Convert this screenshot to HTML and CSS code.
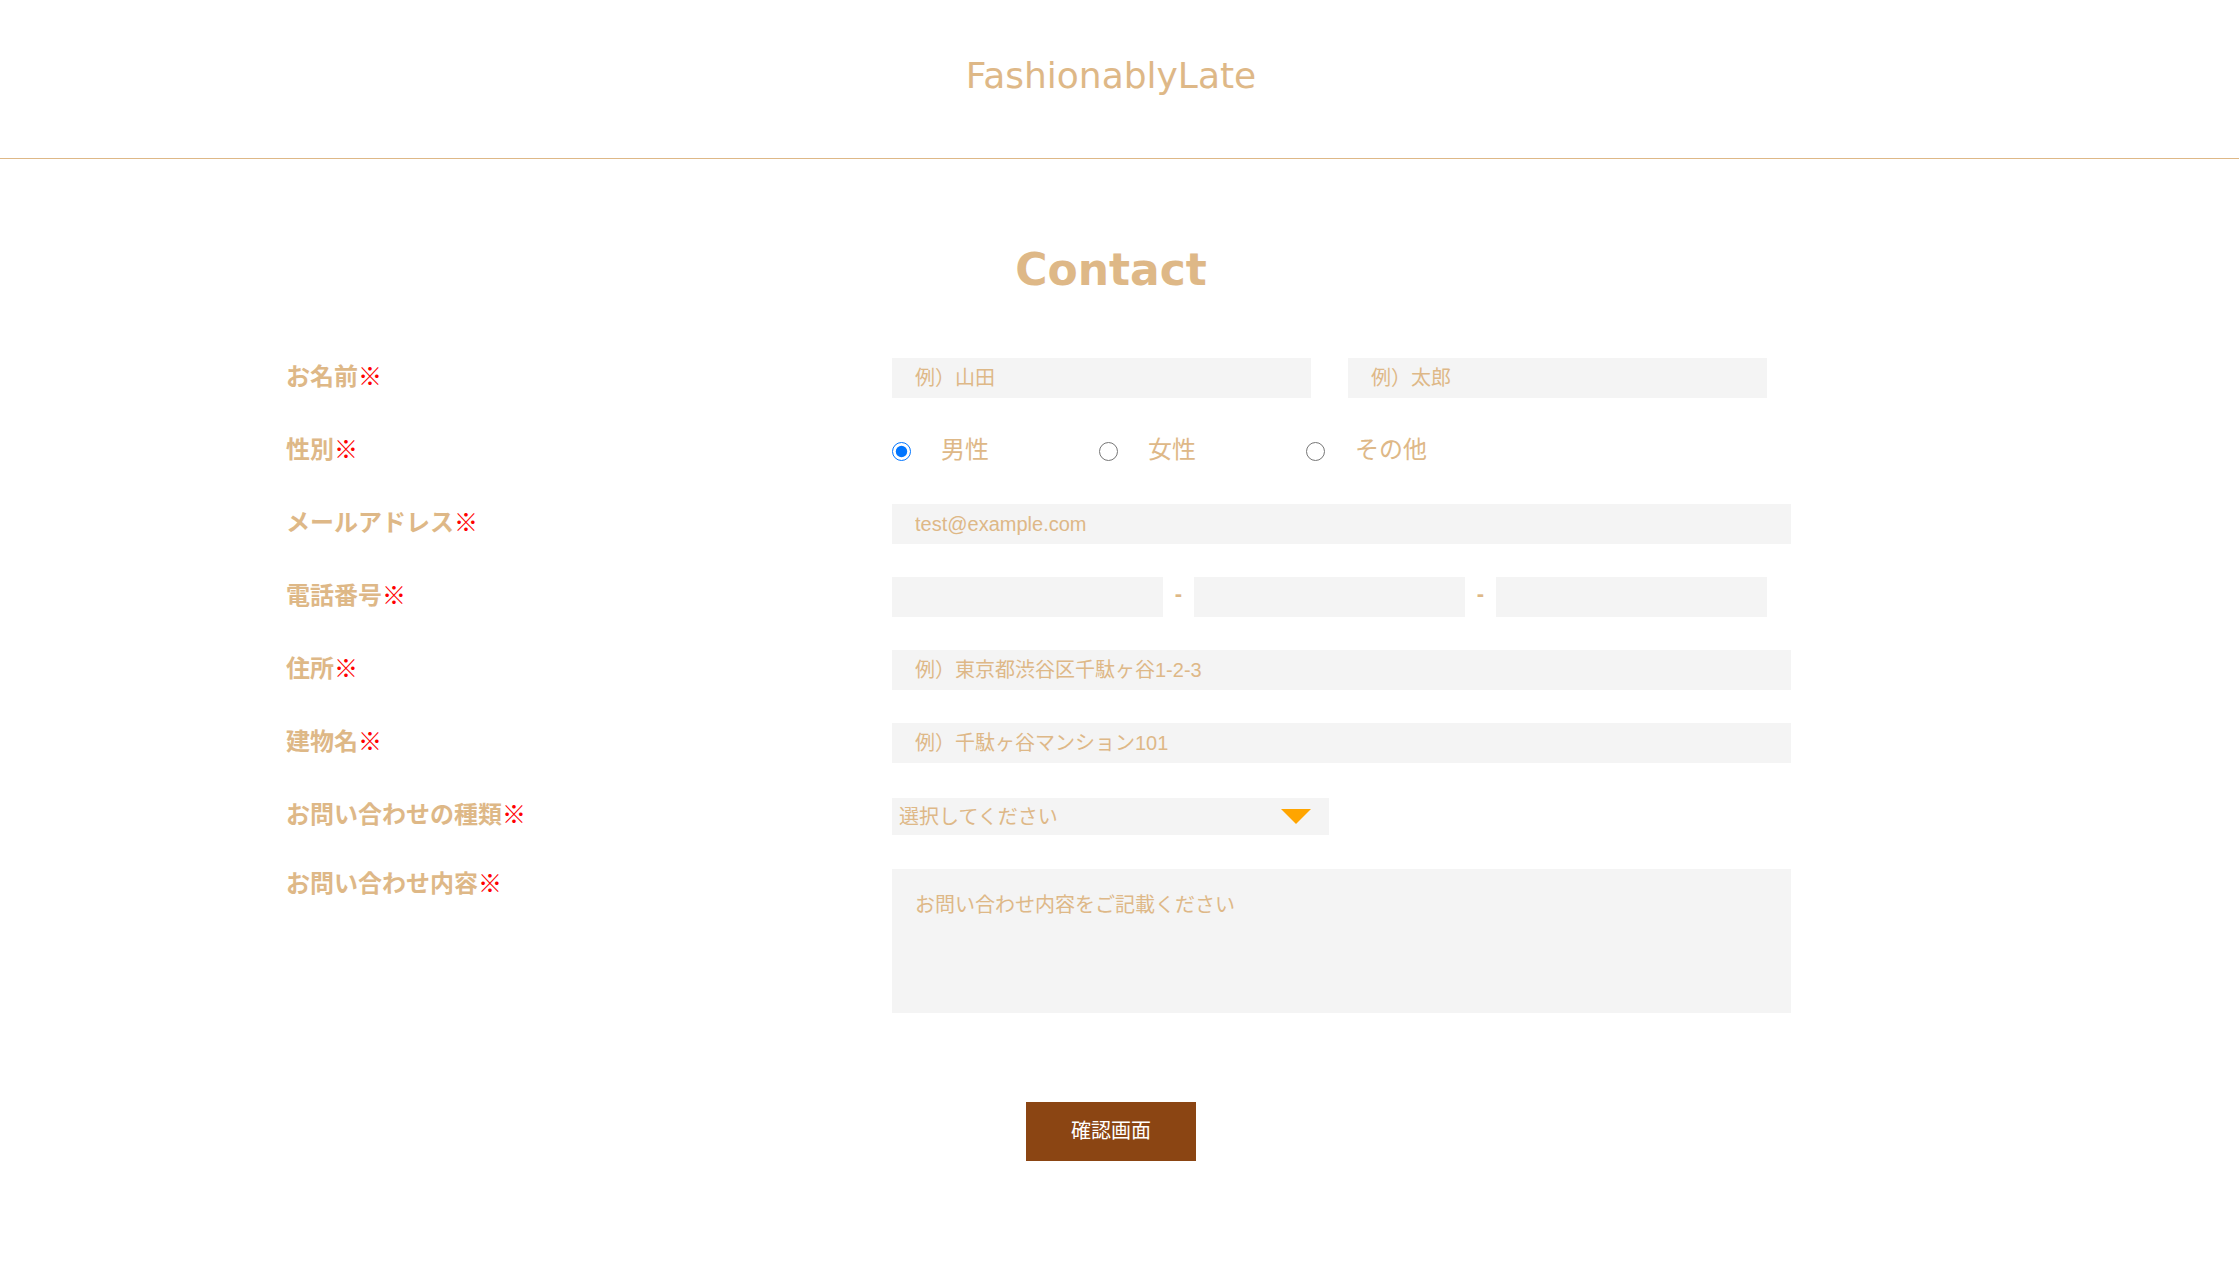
FILE: index.html
```html
<!DOCTYPE html>
<html lang="ja">
<head>
<meta charset="utf-8">
<title>Contact</title>
<link rel="stylesheet" href="styles.css">
</head>
<body>
<header class="site-header">
  <div class="header-inner">
    <h1 class="logo">FashionablyLate</h1>
  </div>
</header>
<main class="page">
  <h2 class="page-title">Contact</h2>
  <form class="contact-form">
    <div class="row">
      <label class="row-label">お名前<span class="req">※</span></label>
      <div class="row-field pair">
        <input class="text-input half" type="text" placeholder="例）山田">
        <input class="text-input half" type="text" placeholder="例）太郎">
      </div>
    </div>
    <div class="row">
      <label class="row-label">性別<span class="req">※</span></label>
      <div class="row-field radios">
        <label class="radio-item"><input type="radio" name="gender" checked><span class="radio-text">男性</span></label>
        <label class="radio-item"><input type="radio" name="gender"><span class="radio-text">女性</span></label>
        <label class="radio-item"><input type="radio" name="gender"><span class="radio-text">その他</span></label>
      </div>
    </div>
    <div class="row">
      <label class="row-label">メールアドレス<span class="req">※</span></label>
      <div class="row-field">
        <input class="text-input full" type="email" placeholder="test@example.com">
      </div>
    </div>
    <div class="row">
      <label class="row-label">電話番号<span class="req">※</span></label>
      <div class="row-field phone">
        <input class="text-input tel" type="tel">
        <span class="dash">-</span>
        <input class="text-input tel" type="tel">
        <span class="dash">-</span>
        <input class="text-input tel" type="tel">
      </div>
    </div>
    <div class="row">
      <label class="row-label">住所<span class="req">※</span></label>
      <div class="row-field">
        <input class="text-input full" type="text" placeholder="例）東京都渋谷区千駄ヶ谷1-2-3">
      </div>
    </div>
    <div class="row">
      <label class="row-label">建物名<span class="req">※</span></label>
      <div class="row-field">
        <input class="text-input full" type="text" placeholder="例）千駄ヶ谷マンション101">
      </div>
    </div>
    <div class="row row-select">
      <label class="row-label">お問い合わせの種類<span class="req">※</span></label>
      <div class="row-field">
        <span class="select-wrap">
          <select class="select">
            <option>選択してください</option>
          </select>
        </span>
      </div>
    </div>
    <div class="row row-top">
      <label class="row-label">お問い合わせ内容<span class="req">※</span></label>
      <div class="row-field">
        <textarea class="textarea" placeholder="お問い合わせ内容をご記載ください"></textarea>
      </div>
    </div>
    <div class="actions">
      <button class="submit" type="button">確認画面</button>
    </div>
  </form>
</main>
</body>
</html>
```
FILE: styles.css
```css
* { box-sizing: border-box; }

html, body {
  margin: 0;
  padding: 0;
  background: #ffffff;
}

body {
  font-family: "Liberation Sans", "Noto Sans CJK JP", sans-serif;
  color: #deb887;
}

.site-header {
  height: 159px;
  border-bottom: 1px solid #deb887;
}

.header-inner {
  width: calc(100% - 17px);
  height: 158px;
  display: flex;
  align-items: center;
  justify-content: center;
  padding-bottom: 6px;
}

.logo {
  margin: 0;
  font-family: "DejaVu Sans", "Noto Sans CJK JP", sans-serif;
  font-weight: normal;
  font-size: 36px;
  line-height: 44px;
  color: #deb887;
}

.page {
  width: calc(100% - 17px);
}

.page-title {
  margin: 81px 0 0;
  text-align: center;
  font-family: "DejaVu Sans", "Noto Sans CJK JP", sans-serif;
  font-weight: bold;
  font-size: 44px;
  line-height: 60px;
  color: #deb887;
}

.contact-form {
  width: 1650px;
  margin: 58px auto 0;
  display: flex;
  flex-direction: column;
  gap: 33px;
}

.row {
  display: flex;
  align-items: center;
  min-height: 40px;
}

.row-select { min-height: 37px; }

.row-top { align-items: flex-start; }

.row-label {
  width: 606px;
  flex: none;
  font-family: "Noto Sans CJK JP", sans-serif;
  font-weight: bold;
  font-size: 24px;
  line-height: 34px;
  padding-bottom: 6px;
  color: #deb887;
}

.row-top .row-label {
  line-height: 26px;
  padding-bottom: 0;
}

.req {
  color: #ff0000;
  font-weight: normal;
}

.row-field {
  flex: 1;
  display: flex;
  align-items: center;
}

.text-input {
  height: 40px;
  border: none;
  outline: none;
  background: #f4f4f4;
  padding: 0 23px;
  font-family: "Liberation Sans", "Noto Sans CJK JP", sans-serif;
  font-size: 20px;
  color: #deb887;
}

.text-input::placeholder,
.textarea::placeholder {
  color: #deb887;
  opacity: 1;
}

.pair { gap: 37px; }

.half { width: 419px; }

.full { width: 899px; }

.tel { width: 271px; }

.dash {
  width: 31px;
  text-align: center;
  font-family: "Liberation Sans", sans-serif;
  font-weight: bold;
  font-size: 22px;
  line-height: 34px;
  padding-bottom: 6px;
  color: #deb887;
}

.radios {
  gap: 110px;
}

.radio-item {
  display: flex;
  align-items: center;
  gap: 30px;
  font-family: "Noto Sans CJK JP", sans-serif;
  font-size: 24px;
  color: #deb887;
}

.radio-text {
  line-height: 34px;
  padding-bottom: 6px;
}

.radio-item input {
  width: 19px;
  height: 19px;
  margin: 0;
  accent-color: #0075ff;
}

.select-wrap {
  position: relative;
  display: inline-block;
}

.select {
  width: 437px;
  height: 37px;
  border: none;
  outline: none;
  background: #f4f4f4;
  padding: 0 0 2px 7px;
  -webkit-appearance: none;
  appearance: none;
  font-family: "Noto Sans CJK JP", sans-serif;
  font-size: 20px;
  color: #deb887;
}

.select-wrap::after {
  content: "";
  position: absolute;
  right: 18px;
  top: 11px;
  width: 0;
  height: 0;
  border-left: 15px solid transparent;
  border-right: 15px solid transparent;
  border-top: 15px solid #ffa500;
  pointer-events: none;
}

.textarea {
  display: block;
  width: 899px;
  height: 144px;
  border: none;
  outline: none;
  resize: none;
  background: #f4f4f4;
  padding: 23px;
  font-family: "Noto Sans CJK JP", sans-serif;
  font-size: 20px;
  line-height: 24px;
  color: #deb887;
}

.actions {
  display: flex;
  justify-content: center;
  margin-top: 56px;
  padding-bottom: 120px;
  width: 2222px;
  margin-left: -286px;
}

.submit {
  width: 170px;
  height: 59px;
  border: none;
  padding: 0 0 4px;
  background: #8b4513;
  color: #ffffff;
  font-family: "Noto Sans CJK JP", sans-serif;
  font-size: 20px;
  cursor: pointer;
}
```
